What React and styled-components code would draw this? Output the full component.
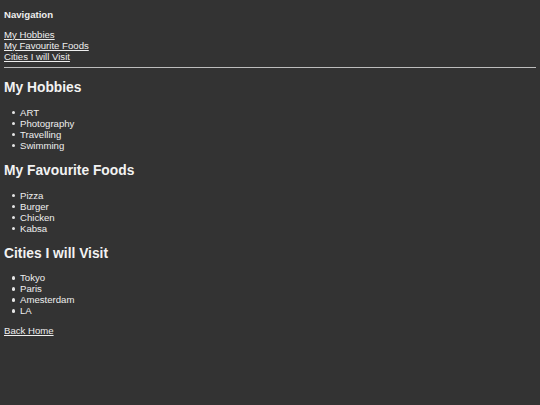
import React from 'react'
import styled, { createGlobalStyle } from 'styled-components';

const GlobalStyle = createGlobalStyle`
	html, body {
		margin: 0;
		padding: 0;
		background: #333333;
	}
	body {
		min-height: 405px;
		font-family: "Liberation Sans", Arial, sans-serif;
		color: #eeeeee;
	}
`;

const Page = styled.div`
	padding: 0 4px;
	font-size: 9.6px;
	line-height: 11px;
	overflow: hidden;
`;

const Nav = styled.nav`
	padding-top: 8.5px;
`;

const NavTitle = styled.p`
	margin: 0 0 9px;
	font-weight: bold;
`;

const NavLinks = styled.div`
	display: flex;
	flex-direction: column;
	align-items: flex-start;
`;

const Anchor = styled.a`
	color: #eeeeee;
	text-decoration: underline;
	text-underline-offset: 1px;
`;

const Rule = styled.hr`
	margin: 5.5px 0 0;
	border: 0;
	border-top: 1px solid #bdbdbd;
	height: 0;
`;

const Section = styled.section`
	padding-top: 12px;
`;

const Heading = styled.h2`
	margin: 0 0 10.8px;
	font-size: 13.8px;
	line-height: 16px;
	font-weight: bold;
	color: #f2f2f2;
`;

const List = styled.ul`
	margin: 0;
	padding-left: 16px;
	list-style: none;
`;

const Item = styled.li`
	position: relative;
	line-height: 11px;
	&::before {
		content: '';
		position: absolute;
		left: -8.5px;
		top: 4px;
		width: 3.5px;
		height: 3.5px;
		border-radius: 50%;
		background: #e6e6e6;
	}
`;

const Footer = styled.p`
	margin: 8.5px 0 0;
`;

const sections = [
	{ title: 'My Hobbies', items: ['ART', 'Photography', 'Travelling', 'Swimming'] },
	{ title: 'My Favourite Foods', items: ['Pizza', 'Burger', 'Chicken', 'Kabsa'] },
	{ title: 'Cities I will Visit', items: ['Tokyo', 'Paris', 'Amesterdam', 'LA'] },
];

const App = () => {
	return (
		<Page>
			<GlobalStyle />
			<Nav>
				<NavTitle>Navigation</NavTitle>
				<NavLinks>
					<Anchor href='#hobbies'>My Hobbies</Anchor>
					<Anchor href='#foods'>My Favourite Foods</Anchor>
					<Anchor href='#cities'>Cities I will Visit</Anchor>
				</NavLinks>
			</Nav>
			<Rule />
			{sections.map(s => (
				<Section key={s.title}>
					<Heading>{s.title}</Heading>
					<List>
						{s.items.map(i => <Item key={i}>{i}</Item>)}
					</List>
				</Section>
			))}
			<Footer>
				<Anchor href='#home'>Back Home</Anchor>
			</Footer>
		</Page>
	);
}

export default App;
